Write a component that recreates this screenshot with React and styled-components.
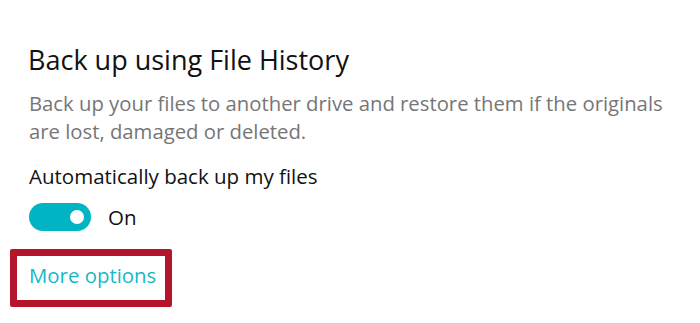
import React from "react";
import styled, { createGlobalStyle } from "styled-components";

const Global = createGlobalStyle`
  html, body { margin: 0; padding: 0; background: #ffffff; }
  body { font-family: "Open Sans", "Noto Sans", sans-serif; }
`;

const Page = styled.div`
  width: 700px;
  height: 323px;
  box-sizing: border-box;
  padding: 40px 0 0 28px;
  display: flex;
  flex-direction: column;
  align-items: flex-start;
`;

const Heading = styled.h2`
  margin: 0;
  font-weight: 400;
  font-size: 27px;
  line-height: 40px;
  color: #111111;
`;

const Description = styled.p`
  margin: 9px 0 0 1px;
  max-width: 655px;
  font-size: 20.3px;
  line-height: 28px;
  color: #767676;
`;

const Label = styled.div`
  margin: 17px 0 0 1px;
  font-size: 20.5px;
  line-height: 28px;
  color: #111111;
`;

const ToggleRow = styled.div`
  margin-top: 13px;
  display: flex;
  align-items: center;
  gap: 17px;
  padding-left: 1px;
`;

const Track = styled.div`
  width: 62px;
  height: 28px;
  border-radius: 14px;
  background: ${(p) => (p.$on ? "#00b4c3" : "#ffffff")};
  display: flex;
  align-items: center;
  justify-content: ${(p) => (p.$on ? "flex-end" : "flex-start")};
  padding: 0 7px;
  box-sizing: border-box;
`;

const Knob = styled.div`
  width: 14px;
  height: 14px;
  border-radius: 50%;
  background: #ffffff;
`;

const State = styled.span`
  font-size: 20.5px;
  line-height: 28px;
  color: #111111;
`;

const Highlight = styled.div`
  margin: 18px 0 0 -18px;
  border: 7px solid #b5152b;
  border-radius: 2px;
  padding: 5px 9px 11px 12px;
`;

const Link = styled.a`
  display: block;
  font-size: 20.4px;
  line-height: 28px;
  color: #17b7c7;
  text-decoration: none;
`;

export default function App() {
  return (
    <>
      <Global />
      <Page>
        <Heading>Back up using File History</Heading>
        <Description>
          Back up your files to another drive and restore them if the originals
          are lost, damaged or deleted.
        </Description>
        <Label>Automatically back up my files</Label>
        <ToggleRow>
          <Track $on>
            <Knob />
          </Track>
          <State>On</State>
        </ToggleRow>
        <Highlight>
          <Link href="#">More options</Link>
        </Highlight>
      </Page>
    </>
  );
}
